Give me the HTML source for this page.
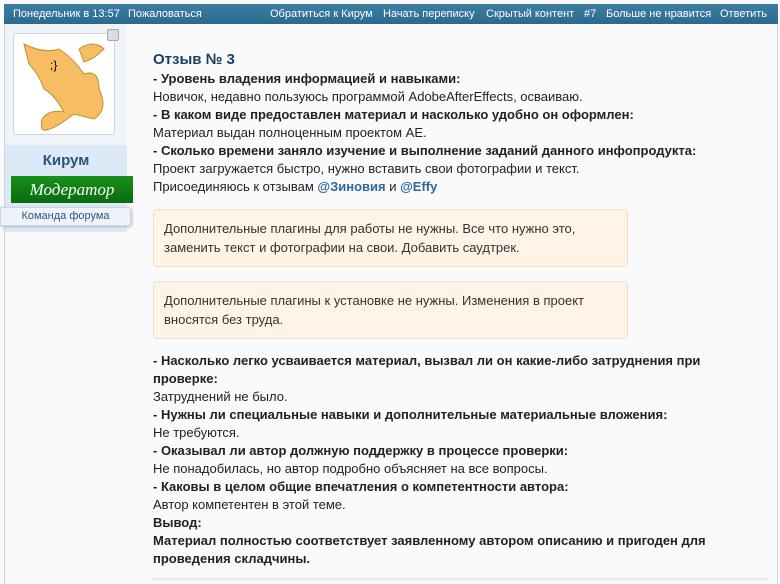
<!DOCTYPE html>
<html><head><meta charset="utf-8"><style>
*{margin:0;padding:0;box-sizing:border-box}
body{width:780px;height:581px;overflow:hidden;background:#fafafd;font-family:"Liberation Sans",Arial,sans-serif;position:relative;color:#222}
.top{position:absolute;left:4px;top:4px;width:774px;height:20px;background:linear-gradient(#3c7fa4,#2b6a90);color:#fff;font-size:11px;line-height:20px}
.top span{position:absolute;top:0}
.frame{position:absolute;left:4px;top:24px;width:774px;height:560px;border-left:1px solid #c9d6e3;border-right:1px solid #c9d6e3}
.side{position:absolute;left:5px;top:24px;width:122px;height:208px;background:#f0f4f9}
.namebg{position:absolute;left:5px;top:145px;width:122px;height:87px;background:#dce9f6}
.av{position:absolute;left:13px;top:33px;width:102px;height:102px;background:#fff;border:1px solid #c9d6e3;border-radius:4px}
.chk{position:absolute;left:107px;top:29px;width:12px;height:12px;background:#ddd;border:1px solid #aaa;border-radius:2px}
.name{position:absolute;left:5px;top:152px;width:122px;text-align:center;font-weight:bold;color:#2b557f;font-size:15px}
.mod{position:absolute;left:11px;top:176px;width:122px;height:27px;background:linear-gradient(#17901a,#0a6b0e);color:#fff;font-family:"Liberation Serif",serif;font-style:italic;font-size:17px;text-align:center;line-height:27px}
.team{position:absolute;left:0;top:207px;width:131px;height:19px;background:#eef3f9;border:1px solid #c9d6e3;box-shadow:1px 1px 3px #bbb;font-size:11px;color:#2b557f;text-align:center;line-height:17px;border-radius:0 3px 3px 0}
.t{position:absolute;left:153px;font-size:13px;line-height:18px;white-space:nowrap}
b{color:#222}
.h{font-size:15px;font-weight:bold;color:#1a3d66}
.a{color:#2b6a9a;font-weight:bold}
.q{position:absolute;left:153px;width:475px;height:58px;background:#fff4e6;border:1px solid #f0dcc0;border-radius:4px;font-size:13px;line-height:19px;padding:9px 10px;color:#333}
</style></head><body>
<div class="top">
<span style="left:9px">Понедельник в 13:57</span><span style="left:124px">Пожаловаться</span>
<span style="left:266px">Обратиться к Кирум</span><span style="left:379px">Начать переписку</span><span style="left:482px">Скрытый контент</span><span style="left:580px">#7</span><span style="left:602px">Больше не нравится</span><span style="left:716px">Ответить</span>
</div>
<div class="frame"></div>
<div class="side"></div><div class="namebg"></div>
<div class="av"><svg width="100" height="100" viewBox="0 0 100 100"><path d="M10 10 Q30 20 45 15 Q60 25 70 40 Q85 35 85 55 Q95 75 80 85 L60 80 Q40 95 35 95 Q25 100 28 85 Q35 75 50 78 Q40 60 30 55 Q25 40 15 30 Z" fill="#f6bd62" stroke="#c98a30" stroke-width="1"/><path d="M65 15 Q80 5 90 15 Q80 25 70 28Z" fill="#f6bd62" stroke="#c98a30"/><text x="36" y="35" font-size="12" font-family="Liberation Sans">;}</text></svg></div>
<div class="chk"></div>
<div class="name">Кирум</div>
<div class="mod">Модератор</div>
<div class="team">Команда форума</div>
<div class="t h" style="top:51px">Отзыв № 3</div>
<div class="t" style="top:70px"><b>- Уровень владения информацией и навыками:</b></div>
<div class="t" style="top:88px">Новичок, недавно пользуюсь программой AdobeAfterEffects, осваиваю.</div>
<div class="t" style="top:106px"><b>- В каком виде предоставлен материал и насколько удобно он оформлен:</b></div>
<div class="t" style="top:124px">Материал выдан полноценным проектом AE.</div>
<div class="t" style="top:142px"><b>- Сколько времени заняло изучение и выполнение заданий данного инфопродукта:</b></div>
<div class="t" style="top:160px">Проект загружается быстро, нужно вставить свои фотографии и текст.</div>
<div class="t" style="top:178px">Присоединяюсь к отзывам <span class="a">@Зиновия</span> и <span class="a">@Effy</span></div>
<div class="q" style="top:209px">Дополнительные плагины для работы не нужны. Все что нужно это,<br>заменить текст и фотографии на свои. Добавить саудтрек.</div>
<div class="q" style="top:281px">Дополнительные плагины к установке не нужны. Изменения в проект<br>вносятся без труда.</div>
<div class="t" style="top:352px"><b>- Насколько легко усваивается материал, вызвал ли он какие-либо затруднения при</b></div>
<div class="t" style="top:370px"><b>проверке:</b></div>
<div class="t" style="top:388px">Затруднений не было.</div>
<div class="t" style="top:406px"><b>- Нужны ли специальные навыки и дополнительные материальные вложения:</b></div>
<div class="t" style="top:424px">Не требуются.</div>
<div class="t" style="top:442px"><b>- Оказывал ли автор должную поддержку в процессе проверки:</b></div>
<div class="t" style="top:460px">Не понадобилась, но автор подробно объясняет на все вопросы.</div>
<div class="t" style="top:478px"><b>- Каковы в целом общие впечатления о компетентности автора:</b></div>
<div class="t" style="top:496px">Автор компетентен в этой теме.</div>
<div class="t" style="top:514px"><b>Вывод:</b></div>
<div class="t" style="top:532px"><b>Материал полностью соответствует заявленному автором описанию и пригоден для</b></div>
<div class="t" style="top:550px"><b>проведения складчины.</b></div>
<div style="position:absolute;left:153px;top:578px;width:615px;height:3px;border-top:1px solid #d6e2ec;background:#eef3f8"></div>
</body></html>
